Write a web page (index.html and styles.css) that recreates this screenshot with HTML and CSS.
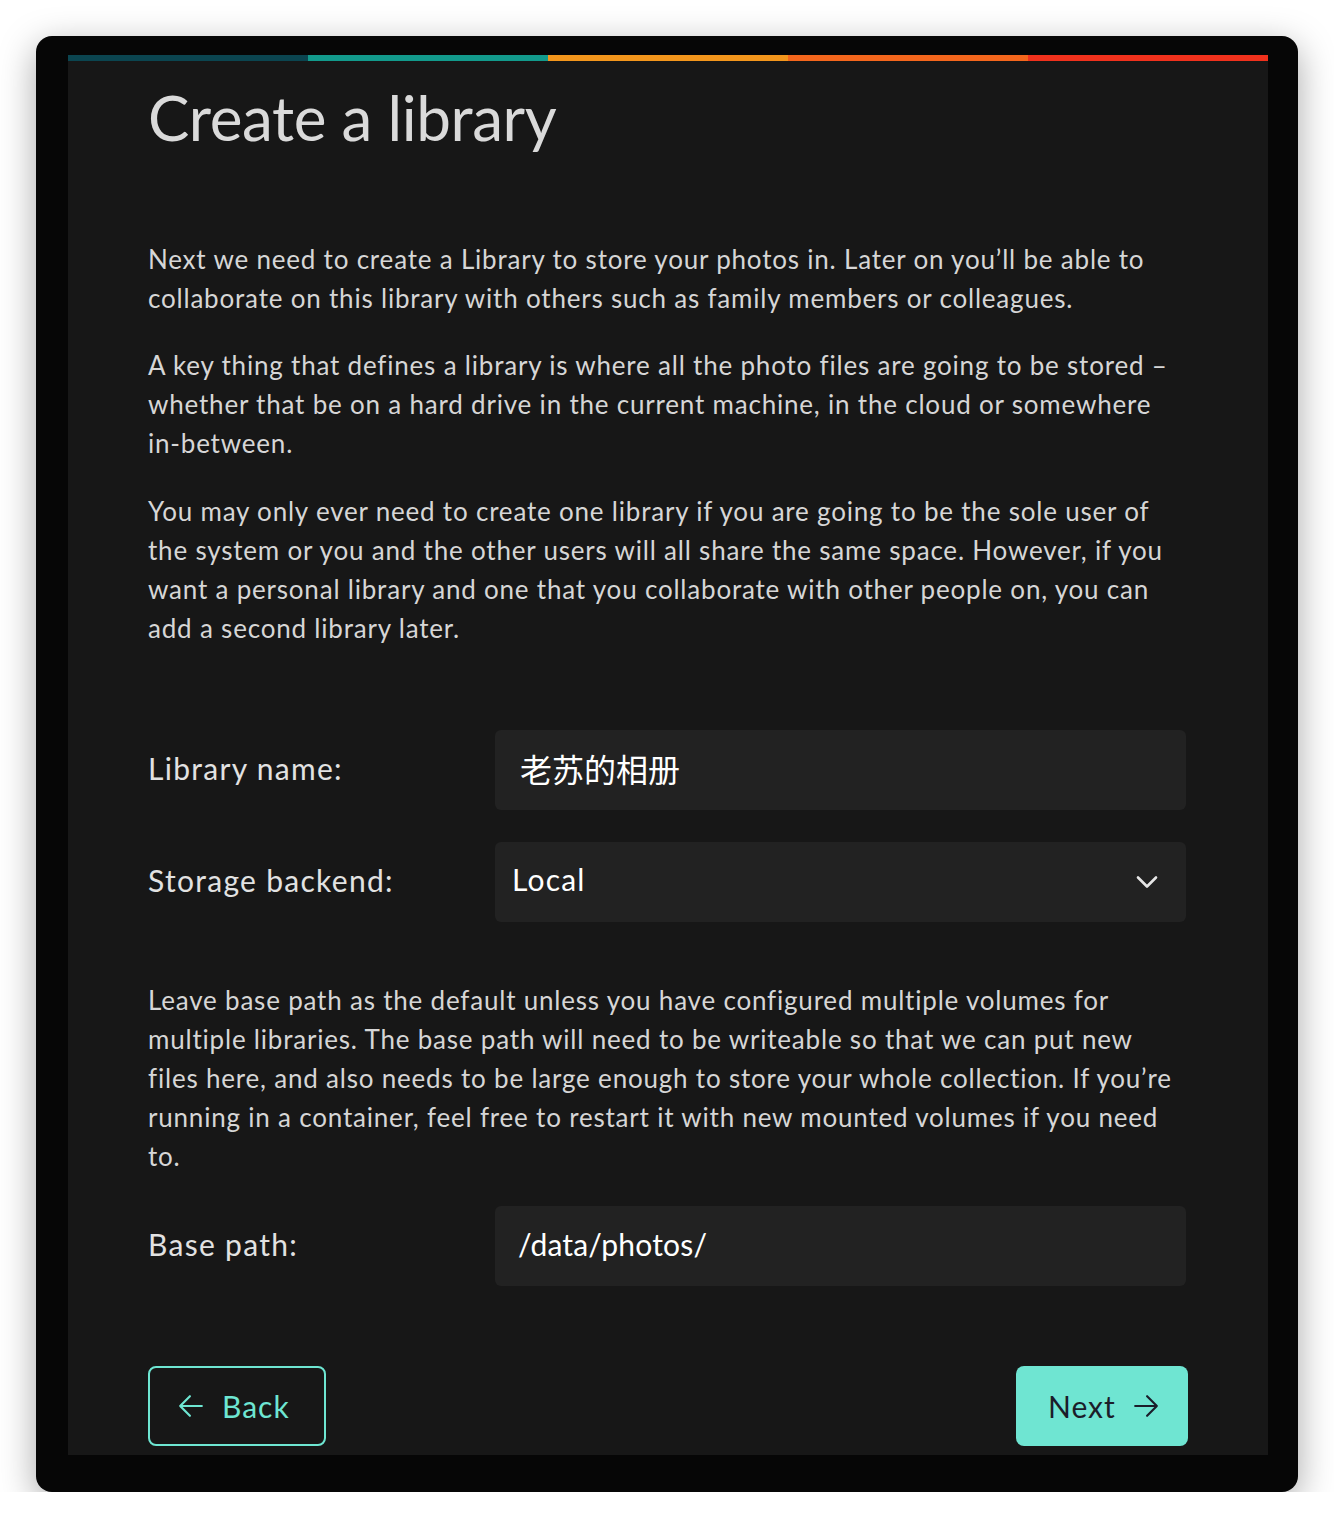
FILE: index.html
```html
<!DOCTYPE html>
<html lang="en">
<head>
<meta charset="utf-8">
<title>Create a library</title>
<link rel="stylesheet" href="styles.css">
</head>
<body>
<div class="window">
  <div class="panel">
    <div class="bar">
      <span class="seg seg1"></span>
      <span class="seg seg2"></span>
      <span class="seg seg3"></span>
      <span class="seg seg4"></span>
      <span class="seg seg5"></span>
    </div>
    <div class="content">
      <h1 class="title">Create a library</h1>
      <p class="text first">Next we need to create a Library to store your photos in. Later on you’ll be able to collaborate on this library with others such as family members or colleagues.</p>
      <p class="text">A key thing that defines a library is where all the photo files are going to be stored – whether that be on a hard drive in the current machine, in the cloud or somewhere in&#8209;between.</p>
      <p class="text">You may only ever need to create one library if you are going to be the sole user of the system or you and the other users will all share the same space. However, if you want a personal library and one that you collaborate with other people on, you can add a second library later.</p>

      <div class="form form-top">
        <label class="label">Library name:</label>
        <div class="field"><span class="value cjk">老苏的相册</span></div>
        <label class="label">Storage backend:</label>
        <div class="field select">
          <span class="value local">Local</span>
          <svg class="chev" width="24" height="24" viewBox="0 0 24 24"><path d="M3 7.5l9 9 9-9" fill="none" stroke="#e6e6e6" stroke-width="2.6" stroke-linecap="round" stroke-linejoin="round"/></svg>
        </div>
      </div>

      <p class="text note">Leave base path as the default unless you have configured multiple volumes for multiple libraries. The base path will need to be writeable so that we can put new files here, and also needs to be large enough to store your whole collection. If you’re running in a container, feel free to restart it with new mounted volumes if you need to.</p>

      <div class="form">
        <label class="label">Base path:</label>
        <div class="field"><span class="value path">/data/photos/</span></div>
      </div>

      <div class="buttons">
        <button class="btn back">
          <svg width="26" height="26" viewBox="0 0 24 24"><path d="M2 12h20M11 3l-9 9 9 9" fill="none" stroke="#6ee6d2" stroke-width="2" stroke-linecap="round" stroke-linejoin="round"/></svg>
          <span>Back</span>
        </button>
        <button class="btn next">
          <span>Next</span>
          <svg width="26" height="26" viewBox="0 0 24 24"><path d="M2 12h20M13 3l9 9-9 9" fill="none" stroke="#1b1d2a" stroke-width="2" stroke-linecap="round" stroke-linejoin="round"/></svg>
        </button>
      </div>
    </div>
  </div>
</div>
</body>
</html>
```

FILE: styles.css
```css
html, body {
  margin: 0;
  padding: 0;
  background: #ffffff;
}

body {
  font-family: "Lato", "Noto Sans CJK SC", sans-serif;
}

.window {
  margin: 36px 0 0 36px;
  width: 1262px;
  height: 1456px;
  box-sizing: border-box;
  padding: 19px 30px 0 32px;
  background: #060606;
  border-radius: 16px;
  box-shadow: 0 10px 36px rgba(0, 0, 0, 0.35);
}

.panel {
  width: 1200px;
  height: 1400px;
  background: #171717;
  overflow: hidden;
}

.bar {
  display: flex;
  height: 6px;
}

.seg {
  flex: 1;
}
.seg1 { background: #0b4550; }
.seg2 { background: #129a8c; }
.seg3 { background: #f3961c; }
.seg4 { background: #f4661c; }
.seg5 { background: #f0311c; }

.content {
  padding: 0 80px;
}

.title {
  margin: 18px 0 0;
  font-size: 62px;
  line-height: 77px;
  font-weight: 400;
  color: #dadada;
  letter-spacing: -0.4px;
}

.text {
  margin: 0 0 28px;
  font-size: 26px;
  line-height: 39px;
  color: #d6d6d6;
  letter-spacing: 0.8px;
}

.text.first {
  margin-top: 84px;
}

.text.first + .text + .text {
  margin-top: 29px;
}

.form {
  display: grid;
  grid-template-columns: 347px 691px;
  row-gap: 32px;
  align-items: center;
}

.form-top {
  margin-top: 82px;
  margin-bottom: 59px;
}

.note {
  margin-bottom: 30px;
}

.label {
  font-size: 30px;
  color: #e2e2e2;
  letter-spacing: 1.3px;
  padding-bottom: 4px;
}

.field {
  height: 80px;
  background: #222222;
  border-radius: 6px;
  display: flex;
  align-items: center;
  padding: 0 25px;
  box-sizing: border-box;
}

.field.select {
  padding: 0 27px 0 17px;
  justify-content: space-between;
}

.value {
  font-size: 30px;
  color: #ffffff;
  letter-spacing: 1.2px;
  padding-bottom: 4px;
}

.value.local {
  padding-bottom: 6px;
}

.value.path {
  margin-left: -2px;
  letter-spacing: 0.2px;
}

.cjk {
  font-family: "Noto Sans CJK SC", sans-serif;
  font-size: 32px;
  letter-spacing: 0;
}

.chev {
  display: block;
}

.buttons {
  margin-top: 80px;
  display: flex;
  justify-content: space-between;
}

.btn {
  height: 80px;
  box-sizing: border-box;
  display: flex;
  align-items: center;
  font-family: "Lato", sans-serif;
  font-size: 30px;
  letter-spacing: 1px;
  border-radius: 8px;
  cursor: pointer;
}

.btn svg {
  display: block;
}

.back {
  width: 178px;
  padding: 0 0 0 28px;
  gap: 18px;
  background: transparent;
  border: 2px solid #6ee6d2;
  color: #6ee6d2;
}

.next {
  width: 172px;
  padding: 0 0 0 32px;
  gap: 17px;
  background: #6fe5d2;
  border: none;
  color: #1b1d2a;
}
```
